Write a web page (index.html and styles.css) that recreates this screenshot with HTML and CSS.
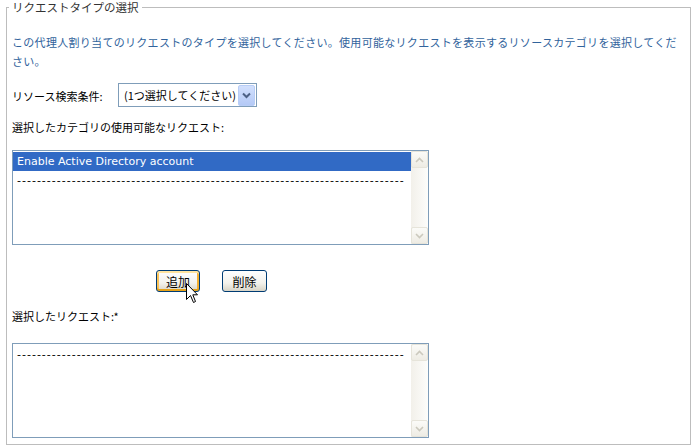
FILE: index.html
```html
<!DOCTYPE html>
<html>
<head>
	<meta charset="utf-8">
	<title>リクエストタイプの選択</title>
	<link rel="stylesheet" href="styles.css">
</head>
<body>
	<fieldset class="panel">
		<legend class="panel-title">リクエストタイプの選択</legend>
		<p class="intro">この代理人割り当てのリクエストのタイプを選択してください。使用可能なリクエストを表示するリソースカテゴリを選択してください。</p>

		<div class="field">
			<span class="field-label">リソース検索条件:</span>
			<div class="combo">
				<span class="combo-text">(1つ選択してください)</span>
				<span class="combo-btn">
					<svg width="9" height="7" viewBox="0 0 9 7"><path d="M1 1.5 L4.5 5 L8 1.5" fill="none" stroke="#4d6185" stroke-width="2"/></svg>
				</span>
			</div>
		</div>

		<p class="caption">選択したカテゴリの使用可能なリクエスト:</p>
		<div class="listbox">
			<div class="options">
				<div class="option selected">Enable Active Directory account</div>
				<div class="option dashes">------------------------------------------------------------------------------</div>
			</div>
			<div class="scrollbar">
				<span class="sb-btn"><svg width="9" height="6" viewBox="0 0 9 6"><path d="M1 5 L4.5 1.5 L8 5" fill="none" stroke="#cbc9bd" stroke-width="1.6"/></svg></span>
				<span class="sb-btn"><svg width="9" height="6" viewBox="0 0 9 6"><path d="M1 1 L4.5 4.5 L8 1" fill="none" stroke="#cbc9bd" stroke-width="1.6"/></svg></span>
			</div>
		</div>

		<div class="actions">
			<button class="btn btn-hover">追加</button>
			<button class="btn">削除</button>
			<!-- マウスカーソル -->
			<svg class="cursor" width="13" height="21" viewBox="0 0 13 21"><path d="M0.5 0.5 L0.5 16.5 L4.5 12.5 L7.5 19.5 L9.5 18.5 L6.8 11.8 L11.5 11.8 Z" fill="#fff" stroke="#000" stroke-width="1" stroke-linejoin="miter"/></svg>
		</div>

		<p class="caption caption-selected">選択したリクエスト:*</p>
		<div class="listbox">
			<div class="options">
				<div class="option dashes">------------------------------------------------------------------------------</div>
			</div>
			<div class="scrollbar">
				<span class="sb-btn"><svg width="9" height="6" viewBox="0 0 9 6"><path d="M1 5 L4.5 1.5 L8 5" fill="none" stroke="#cbc9bd" stroke-width="1.6"/></svg></span>
				<span class="sb-btn"><svg width="9" height="6" viewBox="0 0 9 6"><path d="M1 1 L4.5 4.5 L8 1" fill="none" stroke="#cbc9bd" stroke-width="1.6"/></svg></span>
			</div>
		</div>
	</fieldset>
</body>
</html>
```

FILE: styles.css
```css
body{margin: 0;background: #ffffff;font-family: "Noto Sans CJK JP", sans-serif;font-size: 11px;color: #000000;}
p{margin: 0;}

.panel{margin: 0 4px 0 6px;padding: 0 5px 6px;border: 1px solid #bdbdbd;min-width: 0;}
.panel-title{padding: 0 3px;margin-left: -3px;line-height: 15px;font-size: 11.5px;color: #333333;}

.intro{margin-top: 18px;line-height: 19px;color: #31639c;letter-spacing: 0.3px;}

.field{display: flex;align-items: center;height: 24px;margin-top: 12px;}
.field-label{width: 106px;padding-top: 2px;}
.combo{display: flex;align-items: center;justify-content: space-between;width: 139px;height: 24px;box-sizing: border-box;border: 1px solid #7f9db9;padding: 0 1px 0 5px;}
.combo-btn{display: flex;align-items: center;justify-content: center;width: 15px;height: 19px;border: 1px solid #b8cdf6;border-radius: 2px;background: linear-gradient(#d2e0fd, #b4c9f6);}

.caption{margin-top: 11px;line-height: 19px;}
.caption-selected{margin-top: 15px;}

.listbox{display: flex;width: 417px;height: 95px;box-sizing: border-box;border: 1px solid #7f9db9;margin-top: 13px;}
.caption-selected + .listbox{margin-top: 17px;}
.options{flex: 1;padding-top: 1px;font-family: "DejaVu Sans", sans-serif;font-size: 11px;}
.option{height: 17px;line-height: 17px;border: 1px solid transparent;padding-left: 3px;white-space: nowrap;overflow: hidden;}
.option.selected{background: #316ac5;color: #ffffff;border: 1px dotted #ffffff;outline: 1px solid #316ac5;outline-offset: -1px;}
.dashes{letter-spacing: 1px;}

.scrollbar{display: flex;flex-direction: column;justify-content: space-between;width: 17px;background: linear-gradient(to right, #f2f0ea, #fdfdfb);}
.sb-btn{display: flex;align-items: center;justify-content: center;height: 15px;border: 1px solid #e6e4da;border-radius: 2px;background: linear-gradient(#fbfbf8, #eeece4);}

.actions{position: relative;display: flex;gap: 22px;height: 22px;margin-top: 25px;padding-left: 144px;}
.btn{height: 22px;width: 44px;padding: 0;border: 1px solid #003c74;border-radius: 3px;background: linear-gradient(#ffffff, #f3f2ec 60%, #d8d4c6);font-family: "Noto Sans CJK JP", sans-serif;font-size: 12px;color: #000000;}
.btn + .btn{width: 45px;}
.btn-hover{box-shadow: inset 0 2px 0 #ffe4a0, inset 0 -2px 0 #e5a21a, inset 2px 0 0 #fbc35a, inset -2px 0 0 #f3b032;}
.cursor{position: absolute;left: 174px;top: 13px;}
```
